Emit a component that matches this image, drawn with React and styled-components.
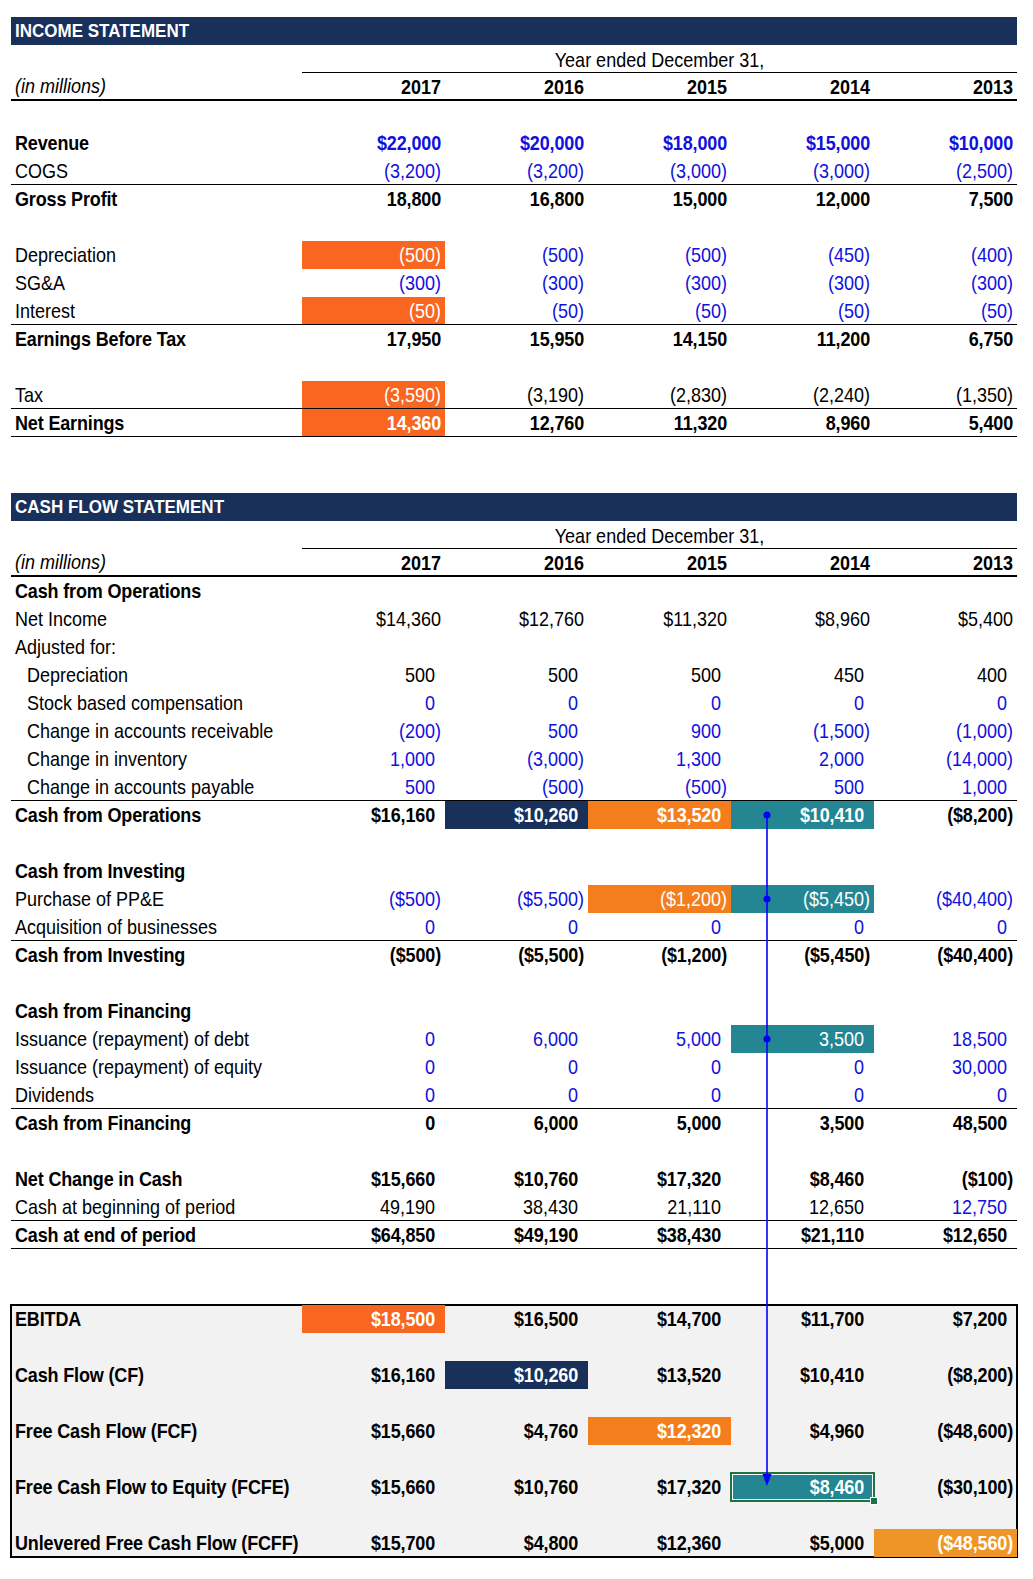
import React from 'react';
import styled, { createGlobalStyle, css } from 'styled-components';

const ROW = 28;
const COLS = '291px repeat(5, 143px)';

const fills = {
	red: '#f8661f',
	orange: '#f47e1e',
	navy: '#18305a',
	teal: '#238692',
	gold: '#ef9527',
};

const GlobalStyle = createGlobalStyle`
	html, body {
		margin: 0;
		padding: 0;
		background: #fff;
	}
	body {
		font-family: 'Liberation Sans', Arial, sans-serif;
		color: #000;
	}
`;

const Page = styled.div`
	position: relative;
	width: 1033px;
	min-height: 1579px;
	padding: 17px 0 0 11px;
	box-sizing: border-box;
`;

const Sheet = styled.div`
	width: 1006px;
	font-size: 18px;
`;

// Excel glyphs in the capture are a touch taller than Arial's
const Txt = styled.span`
	display: inline-block;
	transform-origin: 50% 20px;
	transform: translateY(${({ $shift = 2.5 }) => $shift}px) scaleY(1.1);
`;

const Bar = styled.div`
	height: ${ROW}px;
	line-height: ${ROW}px;
	padding-left: 4px;
	background: ${fills.navy};
	color: #fff;
	font-weight: 700;
	font-size: 17px;
	white-space: nowrap;
`;

const Grid = css`
	display: grid;
	grid-template-columns: ${COLS};
	height: ${ROW}px;
	box-sizing: border-box;
	line-height: ${ROW - 1}px;
	white-space: nowrap;
`;

const YearRow = styled.div`
	${Grid}
`;

const Caption = styled.div`
	grid-column: 2 / span 5;
	text-align: center;
	border-bottom: 1px solid #000;
`;

const HeadRow = styled.div`
	${Grid}
	border-bottom: 2px solid #000;
`;

const Units = styled.div`
	padding-left: 4px;
	font-style: italic;
`;

const Year = styled.div`
	text-align: right;
	padding-right: 4px;
	font-weight: 700;
`;

const Row = styled.div`
	${Grid}
	border-bottom: ${({ $rule }) => ($rule ? '1px solid #000' : 'none')};
	font-weight: ${({ $bold }) => ($bold ? 700 : 400)};
	letter-spacing: ${({ $bold }) => ($bold ? '-0.15px' : '0')};
`;

const Spacer = styled.div`
	height: ${({ $rows }) => $rows * ROW}px;
`;

const Label = styled.div`
	padding-left: ${({ $indent }) => ($indent ? 16 : 4)}px;
`;

const Cell = styled.div`
	position: relative;
	text-align: right;
	padding-right: ${({ $pad }) => ($pad ? 10 : 4)}px;
	color: ${({ $fill, $tone }) => ($fill ? '#fff' : $tone === 'blue' ? '#1111dd' : '#000')};
	background: ${({ $fill }) => ($fill ? fills[$fill] : 'transparent')};
	${({ $selected }) => $selected && css`
		outline: 2px solid #1f7244;
		outline-offset: -1px;
		box-shadow: inset 0 0 0 2px #fff;
		&::after {
			content: '';
			position: absolute;
			right: -4px;
			bottom: -4px;
			width: 6px;
			height: 6px;
			background: #1f7244;
			border: 1px solid #fff;
		}
	`}
`;

const Summary = styled.div`
	background: #f2f2f2;
	outline: 2px solid #000;
	outline-offset: -1px;
`;

const Trace = styled.svg`
	position: absolute;
	left: 0;
	top: 0;
	pointer-events: none;
`;

const YEARS = ['2017', '2016', '2015', '2014', '2013'];

const income = [
	{ label: 'Revenue', bold: true, tone: 'blue', values: ['$22,000', '$20,000', '$18,000', '$15,000', '$10,000'] },
	{ label: 'COGS', tone: 'blue', rule: true, values: ['(3,200)', '(3,200)', '(3,000)', '(3,000)', '(2,500)'] },
	{ label: 'Gross Profit', bold: true, values: ['18,800', '16,800', '15,000', '12,000', '7,500'] },
	{ blank: 1 },
	{ label: 'Depreciation', tone: 'blue', values: [{ v: '(500)', fill: 'red' }, '(500)', '(500)', '(450)', '(400)'] },
	{ label: 'SG&A', tone: 'blue', values: ['(300)', '(300)', '(300)', '(300)', '(300)'] },
	{ label: 'Interest', tone: 'blue', rule: true, values: [{ v: '(50)', fill: 'red' }, '(50)', '(50)', '(50)', '(50)'] },
	{ label: 'Earnings Before Tax', bold: true, values: ['17,950', '15,950', '14,150', '11,200', '6,750'] },
	{ blank: 1 },
	{ label: 'Tax', rule: true, values: [{ v: '(3,590)', fill: 'red' }, '(3,190)', '(2,830)', '(2,240)', '(1,350)'] },
	{ label: 'Net Earnings', bold: true, rule: true, values: [{ v: '14,360', fill: 'red' }, '12,760', '11,320', '8,960', '5,400'] },
];

const cashFlow = [
	{ label: 'Cash from Operations', bold: true },
	{ label: 'Net Income', values: ['$14,360', '$12,760', '$11,320', '$8,960', '$5,400'] },
	{ label: 'Adjusted for:' },
	{ label: 'Depreciation', indent: true, pad: true, values: ['500', '500', '500', '450', '400'] },
	{ label: 'Stock based compensation', indent: true, pad: true, tone: 'blue', values: ['0', '0', '0', '0', '0'] },
	{ label: 'Change in accounts receivable', indent: true, pad: true, tone: 'blue', values: ['(200)', '500', '900', '(1,500)', '(1,000)'] },
	{ label: 'Change in inventory', indent: true, pad: true, tone: 'blue', values: ['1,000', '(3,000)', '1,300', '2,000', '(14,000)'] },
	{ label: 'Change in accounts payable', indent: true, pad: true, tone: 'blue', rule: true, values: ['500', '(500)', '(500)', '500', '1,000'] },
	{ label: 'Cash from Operations', bold: true, pad: true, values: ['$16,160', { v: '$10,260', fill: 'navy' }, { v: '$13,520', fill: 'orange' }, { v: '$10,410', fill: 'teal' }, '($8,200)'] },
	{ blank: 1 },
	{ label: 'Cash from Investing', bold: true },
	{ label: 'Purchase of PP&E', pad: true, tone: 'blue', values: ['($500)', '($5,500)', { v: '($1,200)', fill: 'orange' }, { v: '($5,450)', fill: 'teal' }, '($40,400)'] },
	{ label: 'Acquisition of businesses', pad: true, tone: 'blue', rule: true, values: ['0', '0', '0', '0', '0'] },
	{ label: 'Cash from Investing', bold: true, pad: true, values: ['($500)', '($5,500)', '($1,200)', '($5,450)', '($40,400)'] },
	{ blank: 1 },
	{ label: 'Cash from Financing', bold: true },
	{ label: 'Issuance (repayment) of debt', pad: true, tone: 'blue', values: ['0', '6,000', '5,000', { v: '3,500', fill: 'teal' }, '18,500'] },
	{ label: 'Issuance (repayment) of equity', pad: true, tone: 'blue', values: ['0', '0', '0', '0', '30,000'] },
	{ label: 'Dividends', pad: true, tone: 'blue', rule: true, values: ['0', '0', '0', '0', '0'] },
	{ label: 'Cash from Financing', bold: true, pad: true, values: ['0', '6,000', '5,000', '3,500', '48,500'] },
	{ blank: 1 },
	{ label: 'Net Change in Cash', bold: true, pad: true, values: ['$15,660', '$10,760', '$17,320', '$8,460', '($100)'] },
	{ label: 'Cash at beginning of period', pad: true, rule: true, values: ['49,190', '38,430', '21,110', '12,650', { v: '12,750', tone: 'blue' }] },
	{ label: 'Cash at end of period', bold: true, pad: true, rule: true, values: ['$64,850', '$49,190', '$38,430', '$21,110', '$12,650'] },
];

const summary = [
	{ label: 'EBITDA', bold: true, pad: true, values: [{ v: '$18,500', fill: 'red' }, '$16,500', '$14,700', '$11,700', '$7,200'] },
	{ blank: 1 },
	{ label: 'Cash Flow (CF)', bold: true, pad: true, values: ['$16,160', { v: '$10,260', fill: 'navy' }, '$13,520', '$10,410', '($8,200)'] },
	{ blank: 1 },
	{ label: 'Free Cash Flow (FCF)', bold: true, pad: true, values: ['$15,660', '$4,760', { v: '$12,320', fill: 'orange' }, '$4,960', '($48,600)'] },
	{ blank: 1 },
	{ label: 'Free Cash Flow to Equity (FCFE)', bold: true, pad: true, values: ['$15,660', '$10,760', '$17,320', { v: '$8,460', fill: 'teal', selected: true }, '($30,100)'] },
	{ blank: 1 },
	{ label: 'Unlevered Free Cash Flow (FCFF)', bold: true, pad: true, values: ['$15,700', '$4,800', '$12,360', '$5,000', { v: '($48,560)', fill: 'gold' }] },
];

const LineRow = ({ row }) => {
	if (row.blank) return <Spacer $rows={row.blank} />;
	const values = row.values || [];
	return (
		<Row $rule={row.rule} $bold={row.bold}>
			<Label $indent={row.indent}><Txt>{row.label}</Txt></Label>
			{values.map((item, i) => {
				const cell = typeof item === 'string' ? { v: item } : item;
				const pad = row.pad && !cell.v.endsWith(')');
				return (
					<Cell
						key={i}
						$pad={pad}
						$fill={cell.fill}
						$tone={cell.tone || row.tone}
						$selected={cell.selected}
					>
						<Txt>{cell.v}</Txt>
					</Cell>
				);
			})}
		</Row>
	);
};

const Heading = () => (
	<>
		<YearRow>
			<span />
			<Caption><Txt $shift={3.5}>Year ended December 31,</Txt></Caption>
		</YearRow>
		<HeadRow>
			<Units><Txt $shift={1.5}>(in millions)</Txt></Units>
			{YEARS.map((y) => <Year key={y}><Txt $shift={2}>{y}</Txt></Year>)}
		</HeadRow>
	</>
);

const TraceArrow = () => (
	<Trace width="1033" height="1579" viewBox="0 0 1033 1579">
		<line x1="767" y1="815" x2="767" y2="1476" stroke="#0000ff" strokeWidth="1.6" />
		<circle cx="767" cy="815" r="3.5" fill="#0000ff" />
		<circle cx="767" cy="899" r="3.5" fill="#0000ff" />
		<circle cx="767" cy="1039" r="3.5" fill="#0000ff" />
		<polygon points="762.5,1474 771.5,1474 767,1486" fill="#0000ff" />
	</Trace>
);

const App = () => (
	<Page>
		<GlobalStyle />
		<Sheet>
			<Bar><Txt $shift={1.5}>INCOME STATEMENT</Txt></Bar>
			<Heading />
			<Spacer $rows={1} />
			{income.map((row, i) => <LineRow key={i} row={row} />)}
			<Spacer $rows={2} />
			<Bar><Txt $shift={1.5}>CASH FLOW STATEMENT</Txt></Bar>
			<Heading />
			{cashFlow.map((row, i) => <LineRow key={i} row={row} />)}
			<Spacer $rows={2} />
			<Summary>
				{summary.map((row, i) => <LineRow key={i} row={row} />)}
			</Summary>
		</Sheet>
		<TraceArrow />
	</Page>
);

export default App;
